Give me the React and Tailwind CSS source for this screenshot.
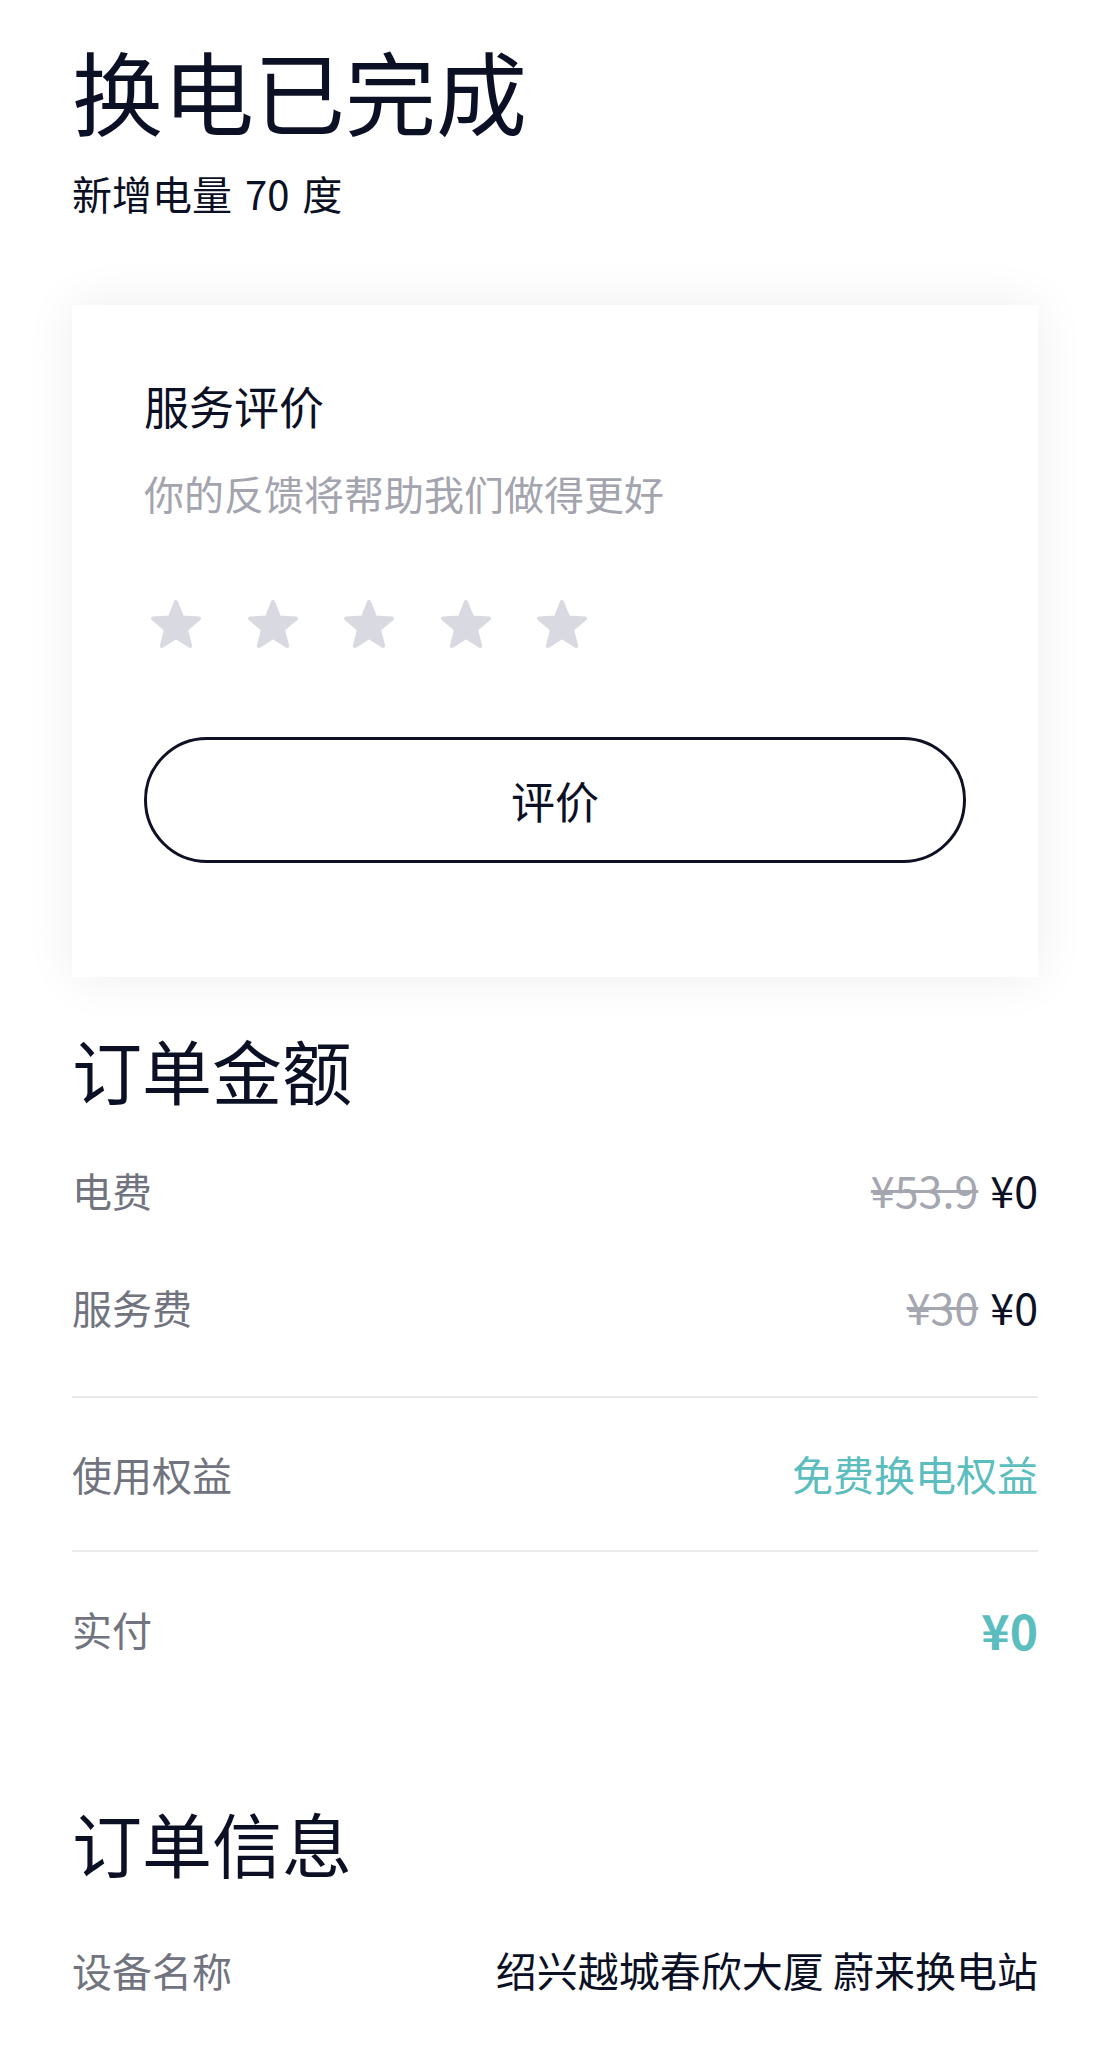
const FONT = { fontFamily: '"Noto Sans CJK SC", "Noto Sans", sans-serif' };

function Star() {
  return (
    <svg width="64" height="64" viewBox="0 0 64 64">
      <polygon
        points="32,9 38.2,24.5 55,25.5 42,36.5 46.2,53 32,44 17.8,53 22,36.5 9,25.5 25.8,24.5"
        fill="#d9dae1"
        stroke="#d9dae1"
        strokeWidth="4"
        strokeLinejoin="round"
      />
    </svg>
  );
}

function Row({ label, children }) {
  return (
    <div className="h-[117px] flex items-center justify-between">
      <span className="text-[40px] text-[#71737e]">{label}</span>
      <span className="text-[41px]">{children}</span>
    </div>
  );
}

function Price({ was, now }) {
  return (
    <span className="flex items-center gap-[12px] text-[43px]">
      <span className="text-[#a4a6b0] line-through decoration-[3px]">{was}</span>
      <span className="text-[#0c1024]">{now}</span>
    </span>
  );
}

export default function App() {
  return (
    <div className="min-h-screen bg-white px-[72px] pt-[34px] text-[#0c1024]" style={FONT}>
      <h1 className="text-[91px] leading-[110px] font-normal">换电已完成</h1>
      <p className="mt-[21px] text-[40px] leading-[56px] [word-spacing:4px]">新增电量 70 度</p>

      <div className="mt-[84px] bg-white shadow-[0_0_48px_rgba(0,0,0,0.07)] pt-[71px] px-[72px] pb-[114px]">
        <h3 className="text-[45px] leading-[60px]">服务评价</h3>
        <p className="mt-[27px] text-[40px] leading-[60px] text-[#a3a4ae]">你的反馈将帮助我们做得更好</p>
        <div className="mt-[70px] flex gap-[32.5px]">
          {[0, 1, 2, 3, 4].map((i) => (
            <Star key={i} />
          ))}
        </div>
        <button className="mt-[80px] w-full h-[126px] rounded-full border-[3px] border-[#0e1025] text-[44px] text-[#0c1024]">
          评价
        </button>
      </div>

      <h2 className="mt-[45px] text-[70px] leading-[96px] font-normal">订单金额</h2>
      <div className="mt-[13px] pb-[31px] border-b-2 border-[#eaeaed]">
        <Row label="电费">
          <Price was="¥53.9" now="¥0" />
        </Row>
        <Row label="服务费">
          <Price was="¥30" now="¥0" />
        </Row>
      </div>
      <div className="h-[154px] flex items-center justify-between border-b-2 border-[#eaeaed]">
        <span className="text-[40px] text-[#71737e]">使用权益</span>
        <span className="text-[41px] text-[#5bbdbe]">免费换电权益</span>
      </div>
      <div className="h-[154px] flex items-center justify-between">
        <span className="text-[40px] text-[#71737e]">实付</span>
        <span className="text-[48px] font-bold text-[#5bbdbe]">¥0</span>
      </div>

      <h2 className="mt-[89px] text-[70px] leading-[96px] font-normal">订单信息</h2>
      <div className="mt-[20px]">
        <Row label="设备名称">
          <span className="text-[#0c1024]">绍兴越城春欣大厦 蔚来换电站</span>
        </Row>
      </div>
    </div>
  );
}
